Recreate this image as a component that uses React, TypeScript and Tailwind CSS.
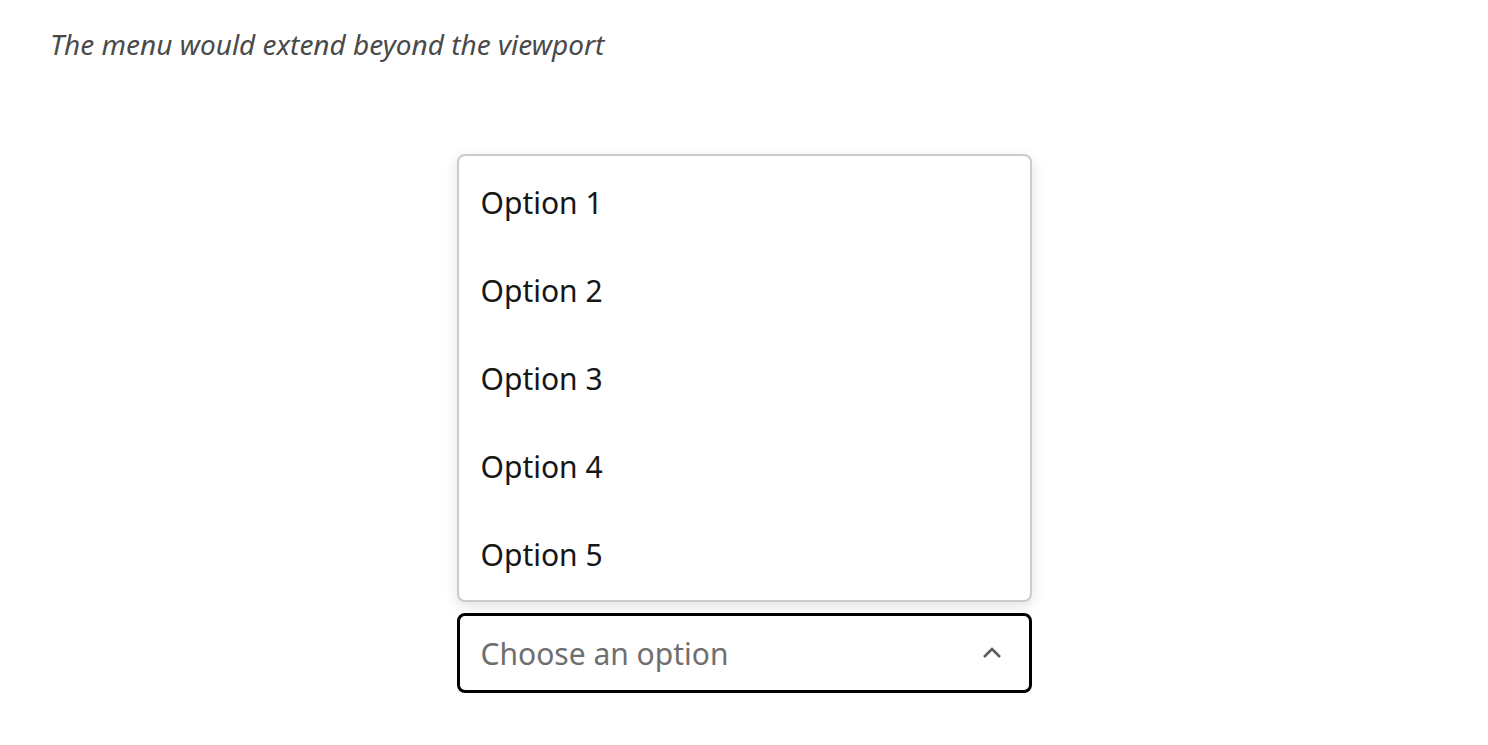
const options = ["Option 1", "Option 2", "Option 3", "Option 4", "Option 5"];

export default function App() {
  return (
    <div className="min-h-[745px] bg-white font-['Noto_Sans',sans-serif] text-[#161616]">
      <p className="px-[50px] pt-[26px] text-[28px] italic leading-[36px] text-[#4a4a4a]">
        The menu would extend beyond the viewport
      </p>
      <div className="mx-auto mt-[92px] flex w-[575px] flex-col gap-[11px]">
        <ul className="rounded-[8px] border-2 border-[#cbcbcb] bg-white py-[2px] shadow-[0_4px_14px_rgba(0,0,0,0.12)]">
          {options.map((opt) => (
            <li key={opt} className="flex h-[88px] items-center px-[22px] text-[30px]">
              {opt}
            </li>
          ))}
        </ul>
        <button className="flex h-[80px] items-center justify-between rounded-[8px] border-[3px] border-black bg-white pl-[21px] pr-[25px] text-left text-[30px] text-[#6f6f6f]">
          <span>Choose an option</span>
          <svg width="24" height="24" viewBox="0 0 24 24" fill="none" stroke="#5a5a5a" strokeWidth="2.5">
            <path d="M4 16 L12 8 L20 16" />
          </svg>
        </button>
      </div>
    </div>
  );
}
